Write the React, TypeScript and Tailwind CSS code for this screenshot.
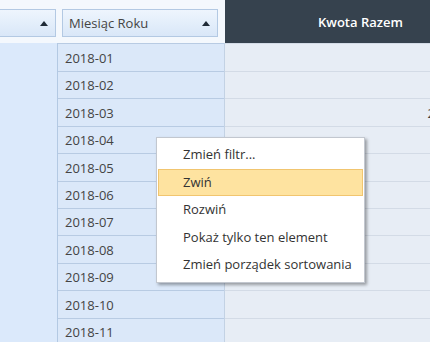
import React from "react";

const months = ["2018-01", "2018-02", "2018-03", "2018-04", "2018-05", "2018-06", "2018-07", "2018-08", "2018-09", "2018-10", "2018-11"];
const menu = ["Zmień filtr...", "Zwiń", "Rozwiń", "Pokaż tylko ten element", "Zmień porządek sortowania"];

function SortArrow() {
  return (
    <svg width="8" height="5" viewBox="0 0 8 5" className="shrink-0">
      <path d="M0 5 L4 0 L8 5 Z" fill="#1f2a36" />
    </svg>
  );
}

export default function App() {
  return (
    <div
      className="relative w-[430px] h-[342px] overflow-hidden bg-white text-[13px] text-[#3c3c3c]"
      style={{ fontFamily: '"Open Sans", "Noto Sans", sans-serif' }}
    >
      {/* header */}
      <div className="flex h-[43px]">
        <div className="flex w-[225px] shrink-0 items-start bg-[#f4f8fd] pt-[9px]">
          <div className="flex h-[28px] w-[56px] items-center justify-end border border-l-0 border-[#b3c9e3] bg-gradient-to-b from-[#eef5fd] to-[#d9e7f8] pr-[7px]">
            <SortArrow />
          </div>
          <div className="ml-[6px] flex h-[28px] w-[156px] items-center justify-between border border-[#b3c9e3] bg-gradient-to-b from-[#eef5fd] to-[#d9e7f8] pl-[6px] pr-[7px] pt-[1px] text-[#444]">
            <span>Miesiąc Roku</span>
            <SortArrow />
          </div>
        </div>
        <div className="flex flex-1 items-center bg-[#36424e] pl-[93px] pt-[2px] font-semibold text-white">
          Kwota Razem
        </div>
      </div>

      {/* body */}
      <div className="flex">
        <div className="w-[58px] shrink-0 h-[300px] bg-[#dbe9fb] border-r border-[#b3c9e3]" />
        <div className="w-[167px] shrink-0 bg-[#dbe8f9] border-r border-[#c3d2e4]">
          {months.map((m, i) => (
            <div
              key={m}
              className={`flex items-center border-b border-[#b8cbe3] pl-[7px] pt-[2px] text-[#444] ${i === 0 ? "h-[29px] border-t" : "h-[27.4px]"}`}
            >
              {m}
            </div>
          ))}
        </div>
        <div className="flex-1 bg-[#e7edf5]">
          {months.map((m, i) => (
            <div
              key={m}
              className={`flex items-center justify-end border-b border-[#d3dbe6] pt-[2px] ${i === 0 ? "h-[29px] border-t" : "h-[27.4px]"}`}
            >
              {i === 2 ? <span className="-mr-[5px] text-[#3c3c3c]">2</span> : null}
            </div>
          ))}
        </div>
      </div>

      {/* context menu */}
      <div className="absolute left-[156px] top-[137px] w-[209px] border border-[#c2c7cf] bg-white py-[3px] px-[1px] shadow-[2px_2px_3px_rgba(0,0,0,0.35)]">
        {menu.map((item, i) => (
          <div
            key={item}
            className={`flex h-[27.5px] items-center pl-[24px] text-[#333] ${i === 1 ? "border border-[#f1c56f] bg-[#fee3a0]" : "border border-transparent"}`}
          >
            {item}
          </div>
        ))}
      </div>
    </div>
  );
}
